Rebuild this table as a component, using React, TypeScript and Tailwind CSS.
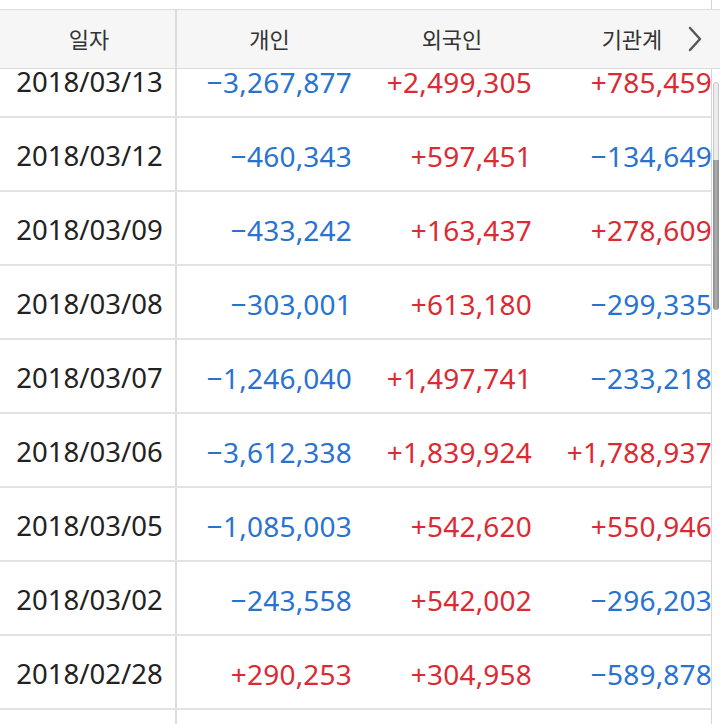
import React from 'react';

type Row = { date: string; personal: string; foreign: string; inst: string };

const rows: Row[] = [
    { date: '2018/03/13', personal: '−3,267,877', foreign: '+2,499,305', inst: '+785,459' },
    { date: '2018/03/12', personal: '−460,343', foreign: '+597,451', inst: '−134,649' },
    { date: '2018/03/09', personal: '−433,242', foreign: '+163,437', inst: '+278,609' },
    { date: '2018/03/08', personal: '−303,001', foreign: '+613,180', inst: '−299,335' },
    { date: '2018/03/07', personal: '−1,246,040', foreign: '+1,497,741', inst: '−233,218' },
    { date: '2018/03/06', personal: '−3,612,338', foreign: '+1,839,924', inst: '+1,788,937' },
    { date: '2018/03/05', personal: '−1,085,003', foreign: '+542,620', inst: '+550,946' },
    { date: '2018/03/02', personal: '−243,558', foreign: '+542,002', inst: '−296,203' },
    { date: '2018/02/28', personal: '+290,253', foreign: '+304,958', inst: '−589,878' },
];

function Num({ value }: { value: string }) {
    const up = value.startsWith('+');
    return (
        <div className={`flex items-center justify-end pr-[10px] pt-[3px] text-[28px] tracking-[0.2px] ${up ? 'text-[#dc2a33]' : 'text-[#2a72cf]'}`}>
            {value}
        </div>
    );
}

export default function App() {
    return (
        <div
            className="relative w-[720px] h-[724px] overflow-hidden bg-white"
            style={{ fontFamily: '"Noto Sans", "Noto Sans CJK KR", sans-serif' }}
        >
            <div className="pt-[9px] w-[722px]">
                {/* header */}
                <div className="relative z-10 grid grid-cols-[177px_185px_180px_180px] h-[60px] border-y border-[#dcdcdc] bg-[#f6f6f6] text-[22px] text-[#333]">
                    <div className="flex items-center justify-center pl-[3px] border-r-2 border-[#dcdcdc]">일자</div>
                    <div className="flex items-center justify-center">개인</div>
                    <div className="flex items-center justify-center">외국인</div>
                    <div className="flex items-center justify-center">기관계</div>
                    <div className="absolute right-[12px] top-0 h-full w-[30px] flex items-center justify-center bg-gradient-to-r from-[#f6f6f6]/0 to-[#f6f6f6]">
                        <svg width="16" height="26" viewBox="0 0 16 26">
                            <path d="M3 2 L13 13 L3 24" fill="none" stroke="#555" strokeWidth="2.4" strokeLinecap="round" strokeLinejoin="round" />
                        </svg>
                    </div>
                </div>

                {/* body, scrolled up by a bit */}
                <div className="-mt-[25px]">
                    {rows.map((r) => (
                        <div
                            key={r.date}
                            className="grid grid-cols-[177px_185px_180px_180px] h-[74px] border-b-2 border-[#e2e2e2] leading-none"
                        >
                            <div className="flex items-center justify-center pl-[4px] pt-[3px] border-r-2 border-[#dcdcdc] text-[27.5px] text-[#222]">{r.date}</div>
                            <Num value={r.personal} />
                            <Num value={r.foreign} />
                            <Num value={r.inst} />
                        </div>
                    ))}
                    {/* next row, only its top edge is in view */}
                    <div className="grid grid-cols-[177px_185px_180px_180px] h-[74px]">
                        <div className="border-r-2 border-[#dcdcdc]" />
                    </div>
                </div>
            </div>

            {/* scrollbar track */}
            <div className="absolute right-0 top-0 h-full w-[9px] border-l border-[#d4d4d4] bg-white">
                <div className="absolute left-[1px] top-[82px] w-[6px] h-[80px] rounded-t-[4px] border border-[#c8c8c8] bg-[#ececec]" />
                <div className="absolute left-[1px] top-[160px] w-[6px] h-[150px] rounded-b-[4px] bg-gradient-to-r from-[#8a8a8a] via-[#b0b0b0] to-[#8a8a8a]" />
            </div>
        </div>
    );
}
